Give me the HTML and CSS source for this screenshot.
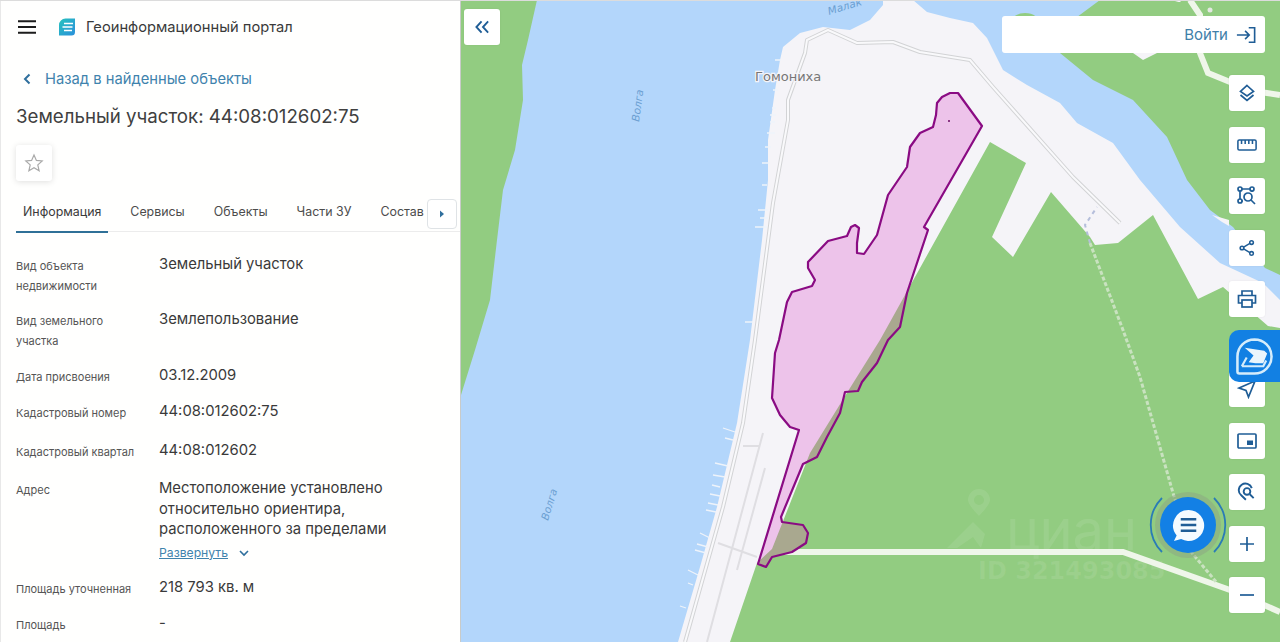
FILE: index.html
```html
<!DOCTYPE html>
<html lang="ru">
<head>
<meta charset="utf-8">
<title>Геоинформационный портал</title>
<link rel="stylesheet" href="styles.css">
</head>
<body>
<div class="app">
  <aside class="panel">
    <header class="brand">
      <svg class="burger" viewBox="0 0 18 14"><path d="M0 1.200h18M0 7h18M0 12.800h18"/></svg>
      <svg class="logo" viewBox="0 0 18 18">
        <defs><linearGradient id="lg" x1="0" y1="0" x2="1" y2="1"><stop offset="0" stop-color="#27c3bd"/><stop offset="1" stop-color="#2b8fdc"/></linearGradient></defs>
        <path d="M1 7a6.500 6.500 0 0 1 6.500-6.500H17V14a3.500 3.500 0 0 1-3.500 3.500H1z" fill="url(#lg)"/>
        <path d="M6 5.500h9M4.500 9h10M6 12.500h8" stroke="#fff" stroke-width="1.400" fill="none"/>
      </svg>
      <span class="brand-name">Геоинформационный портал</span>
    </header>
    <a class="back"><svg class="back-icon" viewBox="0 0 8 12"><path d="M6.500 1.500 2 6l4.500 4.500"/></svg>Назад в найденные объекты</a>
    <h1 class="title">Земельный участок: 44:08:012602:75</h1>
    <button class="star"><svg viewBox="0 0 20 20"><path d="m10 2 2.400 5.400 5.800.6-4.400 3.900 1.300 5.800-5.100-3-5.100 3 1.300-5.800L1.800 8l5.800-.6z"/></svg></button>
    <nav class="tabs">
      <a class="tab active">Информация</a>
      <a class="tab">Сервисы</a>
      <a class="tab">Объекты</a>
      <a class="tab">Части ЗУ</a>
      <a class="tab">Состав</a>
      <span class="tab-next"><svg viewBox="0 0 6 10"><path d="M1 1.500 5 5 1 8.500z"/></svg></span>
    </nav>
    <dl class="props">
      <dt>Вид объекта недвижимости</dt><dd>Земельный участок</dd>
      <dt>Вид земельного участка</dt><dd>Землепользование</dd>
      <dt>Дата присвоения</dt><dd>03.12.2009</dd>
      <dt>Кадастровый номер</dt><dd>44:08:012602:75</dd>
      <dt>Кадастровый квартал</dt><dd>44:08:012602</dd>
      <dt>Адрес</dt>
      <dd>Местоположение установлено относительно ориентира, расположенного за пределами
        <a class="expand"><span class="expand-text">Развернуть</span><svg viewBox="0 0 12 8"><path d="m2 2 4 4 4-4"/></svg></a>
      </dd>
      <dt>Площадь уточненная</dt><dd>218 793 кв. м</dd>
      <dt>Площадь</dt><dd>-</dd>
    </dl>
  </aside>

  <main class="map">
    <svg class="map-canvas" viewBox="461 0 819 642">
      <defs>
        <clipPath id="parcel-clip"><polygon points="982,126 958,93 950,93 942,97 937,103 936,115 933,127 920,133 910,147 907,167 888,195 877,235 864,254 857,253 857,243 859,228 855,225 851,227 847,236 828,241 808,262 808,268 815,280 812,286 792,292 787,302 779,340 775,353 772,398 780,415 790,427 799,430 758,564 766,567 772,557 792,552 806,543 808,533 803,525 782,522 781,517 803,464 817,457 827,437 840,413 845,392 858,391 862,382 877,363 888,340 900,327 907,293 928,230 924,227"/></clipPath>
      </defs>
      <rect class="green" x="461" y="0" width="819" height="642"/>
      <polygon class="water" points="537,0 528,40 522,65 523,100 515,150 503,190 497,240 490,300 475,350 461,395 461,642 700,642 800,300 900,60 1100,150 1200,270 1280,305 1280,275 1265,268 1233,227 1210,210 1187,180 1167,137 1133,100 1093,80 1060,53 1073,20 1100,0"/>
      <ellipse class="green" cx="1025" cy="24" rx="15" ry="11"/>
      <polygon class="land" points="883,0 913,0 927,12 950,18 973,23 987,38 1003,70 1027,85 1060,103 1077,123 1113,143 1140,180 1180,227 1220,263 1263,283 1280,300 1280,328 1268,326 1223,287 1198,299 1153,215 1118,243 1095,245 1090,237 1051,192 1013,257 992,237 1026,163 990,142 905,295 880,340 850,388 810,453 772,549 757,563 730,642 678,642 700,567 717,507 737,423 750,340 762,240 768,180 768,140 775,90 780,60 783,47 800,33 823,27 850,30 870,20 883,5"/>
      <polygon class="land" points="1212,215 1229,220 1229,226 1222,222"/>
      <polygon class="land" points="1133,53 1157,53 1143,60"/>
      <polygon class="land" points="1175,2 1182,0 1180,2"/>
      <path class="jetty" d="M775 60h6M773 90h5M772 108h4M770 115h6M770 122h5M767 133h8M765 147h6M762 163h8M762 185h5M758 210h10M760 218h8M755 227h12M745 322h8M723 428l12 4M725 438l8 2M715 463l13 3M713 475l12 2M712 485l8 2M710 494l10 2M708 503l10 2M706 510l10 2M700 533l10 5M697 544l11 3M695 550l11 3M688 570l10 5M688 583l5 2M680 606l6 2"/>
      <path class="road-inner" d="M763 433 707 642M765 468 737 570M743 446h17M718 543l39 14"/>
      <path class="road-edge" d="M685 642 723 507 743 423 755 340 773 203 788 120 788 100 805 53 807 40 828 30 857 43 893 42 920 52 970 60 993 87 1073 177 1120 223"/>
      <path class="road-core" d="M685 642 723 507 743 423 755 340 773 203 788 120 788 100 805 53 807 40 828 30 857 43 893 42 920 52 970 60 993 87 1073 177 1120 223"/>
      <path class="track-white" d="M770 552H1123L1230 590 1280 612"/>
      <path class="track-white" d="M1190 0 1200 15 1200 53 1208 73 1230 82 1260 92 1280 95"/>
      <circle class="track-dot" cx="1210" cy="10" r="2.500"/>
      <path class="trail" d="M1090 243 1123 330 1140 377 1173 493 1192 553 1217 583"/>
      <path class="trail-blue" d="M1090 243 1085 225 1097 207"/>
      <polygon class="parcel-fill" points="982,126 958,93 950,93 942,97 937,103 936,115 933,127 920,133 910,147 907,167 888,195 877,235 864,254 857,253 857,243 859,228 855,225 851,227 847,236 828,241 808,262 808,268 815,280 812,286 792,292 787,302 779,340 775,353 772,398 780,415 790,427 799,430 758,564 766,567 772,557 792,552 806,543 808,533 803,525 782,522 781,517 803,464 817,457 827,437 840,413 845,392 858,391 862,382 877,363 888,340 900,327 907,293 928,230 924,227"/>
      <polygon class="parcel-overlap" clip-path="url(#parcel-clip)" points="990,142 905,295 880,340 850,388 810,453 772,549 757,563 730,642 1000,642 1000,142"/>
      <polygon class="parcel-line" points="982,126 958,93 950,93 942,97 937,103 936,115 933,127 920,133 910,147 907,167 888,195 877,235 864,254 857,253 857,243 859,228 855,225 851,227 847,236 828,241 808,262 808,268 815,280 812,286 792,292 787,302 779,340 775,353 772,398 780,415 790,427 799,430 758,564 766,567 772,557 792,552 806,543 808,533 803,525 782,522 781,517 803,464 817,457 827,437 840,413 845,392 858,391 862,382 877,363 888,340 900,327 907,293 928,230 924,227"/>
      <circle class="parcel-dot" cx="949" cy="121" r="1"/>
      <text class="town" x="755" y="81">Гомониха</text>
      <text class="river" transform="translate(639 122) rotate(-82)">Волга</text>
      <text class="river" transform="translate(548 521) rotate(-73)">Волга</text>
      <text class="river" transform="translate(829 15) rotate(-17)">Малак</text>
      <path class="wm-shape" d="M979 489a11 11 0 0 1 11 11c0 5-11 16-11 16s-11-11-11-16a11 11 0 0 1 11-11zm0 6a5 5 0 1 0 0 10 5 5 0 0 0 0-10zM947 548l26-26 12 12-4 14-8-11-16 11z"/>
      <text class="wm-title" x="1006" y="550">циан</text>
      <text class="wm-id" x="978" y="579">ID 321493085</text>
    </svg>

    <button class="tool collapse"><svg viewBox="0 0 16 14"><path d="M7 1 1.500 7 7 13M14 1 8.500 7 14 13"/></svg></button>

    <a class="login"><span>Войти</span>
      <svg viewBox="0 0 22 18"><path d="M1 9h13M10 4.500 14.500 9 10 13.500M14 1h6.500v16H14"/></svg>
    </a>

    <div class="tools tools-top">
      <button class="tool"><svg viewBox="0 0 20 20"><path d="M10 2.500 16.500 8.500 10 13 3.500 8.500zM3.500 12 10 17.500 16.500 12"/></svg></button>
      <button class="tool"><svg viewBox="0 0 22 14"><rect x="1" y="1.500" width="20" height="11" rx="1.500"/><path d="M5 1.500v4.500M9 1.500v4.500M13 1.500v4.500M17 1.500v4.500"/></svg></button>
      <button class="tool"><svg viewBox="0 0 20 20"><circle cx="3" cy="3" r="2"/><circle cx="15" cy="3" r="2"/><circle cx="3" cy="15" r="2"/><circle cx="11" cy="11" r="4"/><path d="M5 3h8M3 5v8M15 5v1M5 15h1M14 14l4 4"/></svg></button>
      <button class="tool"><svg viewBox="-2 -2 22 22"><circle cx="14" cy="3" r="2"/><circle cx="3.500" cy="9" r="2"/><circle cx="14" cy="15" r="2"/><path d="M12.200 4 5.300 8M5.300 10l6.900 4"/></svg></button>
      <button class="tool"><svg viewBox="0 0 20 20"><path d="M5 6V2h10v4M5 14H1.500V6.500h17V14H15"/><rect x="5" y="11" width="10" height="7"/></svg></button>
    </div>

    <div class="tools tools-bottom">
      <button class="tool"><svg viewBox="0 0 20 20"><path d="M18 2 2 9l7 2.500L11.500 18z"/></svg></button>
      <button class="tool"><svg viewBox="0 0 20 16"><rect x="1" y="1" width="18" height="14" rx="1"/><rect class="solid" x="10" y="7.500" width="6" height="4.500"/></svg></button>
      <button class="tool"><svg viewBox="0 0 18 18"><path d="M8 16 3.800 12a6 6 0 1 1 9.500-6.500"/><circle cx="9" cy="8.500" r="3"/><path d="m11.500 11 3.500 3.500"/></svg></button>
      <button class="tool"><svg viewBox="0 0 20 20"><path d="M10 3v14M3 10h14"/></svg></button>
      <button class="tool"><svg viewBox="0 0 20 20"><path d="M3 10h14"/></svg></button>
    </div>

    <button class="doc-tab">
      <svg viewBox="0 0 40 40">
        <path class="doc-ring" d="M20 2.500a17.500 17.500 0 0 1 0 35H4.500a2 2 0 0 1-2-2V20A17.500 17.500 0 0 1 20 2.500z"/>
        <path class="doc-sheet" d="M10 11l20 3 3 3-4 10H21l-7-1 5-7z"/>
        <path class="doc-fold" d="M7 30l5-9M7 30h22l3-6"/>
      </svg>
    </button>

    <button class="chat">
      <svg class="chat-arcs" viewBox="0 0 80 80">
        <path d="M14 13a38 38 0 0 0 0 54M66 13a38 38 0 0 1 0 54"/>
      </svg>
      <svg class="chat-icon" viewBox="0 0 34 34">
        <path class="chat-bubble" d="M17 1a16 16 0 1 1-7.600 30L2 33l2.800-5.800A16 16 0 0 1 17 1z"/>
        <path class="chat-lines" d="M9 10.500h16M9 16.500h16M9 22.500h16"/>
      </svg>
    </button>
  </main>
</div>
</body>
</html>
```
FILE: styles.css
```css
* { box-sizing: border-box; }
html, body { margin: 0; height: 100%; overflow: hidden; }
body { font-family: Inter, "Liberation Sans", sans-serif; color: #383838; background: #fff; }
button { padding: 0; border: 0; background: none; font: inherit; cursor: pointer; }
a { cursor: pointer; }

.app { display: flex; height: 642px; border-top: 1px solid #dcdcdc; }

/* panel */
.panel { flex: 0 0 461px; height: 641px; overflow: hidden; background: #fffffe; border-left: 1px solid #e8e8e8; border-right: 1px solid #c9cbc9; padding-left: 15px; }
.brand { display: flex; align-items: center; height: 18px; margin-top: 17px; }
.burger { width: 18px; height: 14px; margin-left: 2px; fill: none; stroke: #1c1c1c; stroke-width: 2; }
.logo { width: 18px; height: 18px; margin-left: 22px; }
.brand-name { margin-left: 10px; font-size: 14.700px; color: #3a3a3a; white-space: nowrap; }

.back { display: flex; align-items: center; margin-top: 33px; height: 20px; font-size: 14.750px; color: #3f83ad; }
.back-icon { width: 8px; height: 12px; margin: 0 14px 0 7px; fill: none; stroke: #2f6f9d; stroke-width: 2; }

.title { margin: 15px 0 0; font-size: 18.700px; line-height: 26px; font-weight: 400; color: #404040; white-space: nowrap; }

.star { display: flex; align-items: center; justify-content: center; width: 36px; height: 36px; margin-top: 15px; border-radius: 3px; background: #fff; box-shadow: 0 1px 6px rgba(0,0,0,.13); }
.star svg { width: 20px; height: 20px; fill: none; stroke: #a9a9a9; stroke-width: 1.200; }

.tabs { position: relative; display: flex; width: 445px; height: 50px; margin-top: 1px; padding-top: 18px; border-bottom: 1px solid #ececec; }
.tab { height: 32px; padding: 3px 7px 0; margin-right: 15px; font-size: 12.400px; line-height: 18px; color: #4c4c4c; white-space: nowrap; }
.tab.active { margin-bottom: -1px; height: 33px; border-bottom: 2px solid #2f7097; color: #3a3a3a; }
.tab-next { position: absolute; right: 4px; top: 17px; display: flex; align-items: center; justify-content: center; width: 30px; height: 30px; background: #fff; border: 1px solid #dfe3e6; border-radius: 4px; }
.tab-next svg { width: 6px; height: 10px; fill: #2f6f9d; }

.props { display: grid; grid-template-columns: 143px 1fr; grid-template-rows: 55px 56px 36px 39px 38px 99px 36px auto; margin: 24px 0 0; }
.props dt { font-size: 11px; line-height: 20.400px; color: #555; max-width: 120px; }
.props dt:nth-of-type(3), .props dt:nth-of-type(4), .props dt:nth-of-type(5), .props dt:nth-of-type(7) { max-width: none; white-space: nowrap; }
.props dd { margin: -2px 0 0; padding-right: 40px; font-size: 14.800px; line-height: 20.500px; color: #3a3a3a; }
.expand { display: flex; align-items: center; margin-top: 3px; font-size: 12.200px; line-height: 20px; color: #3f83ad; }
.expand-text { text-decoration: underline; }
.expand svg { width: 12px; height: 8px; margin-left: 10px; fill: none; stroke: #2f6f9d; stroke-width: 1.600; }

/* map */
.map { position: relative; flex: 1; height: 641px; overflow: hidden; background: #92cc81; }
.map-canvas { position: absolute; left: 0; top: -1px; width: 819px; height: 642px; display: block; }
.green { fill: #92cc81; }
.water { fill: #b3d6fb; }
.land { fill: #f5f4f8; }
.jetty { fill: none; stroke: #eef3fa; stroke-width: 1.300; }
.road-inner { fill: none; stroke: #dfdee2; stroke-width: 2; }
.road-edge { fill: none; stroke: #d2d3d5; stroke-width: 4; stroke-linejoin: round; }
.road-core { fill: none; stroke: #f9f9fb; stroke-width: 2; stroke-linejoin: round; }
.track-white { fill: none; stroke: #eff6ea; stroke-width: 6; }
.track-dot { fill: #e4e8e2; }
.trail { fill: none; stroke: #c9e2c0; stroke-width: 3; stroke-dasharray: 4 2; }
.trail-blue { fill: none; stroke: #b5bedb; stroke-width: 2; stroke-dasharray: 4 4; }
.parcel-fill { fill: #edc3ea; }
.parcel-overlap { fill: #a9a88f; }
.parcel-line { fill: none; stroke: #8a0b83; stroke-width: 2.200; stroke-linejoin: round; }
.parcel-dot { fill: #6a0a63; }
.town { font-family: "DejaVu Sans", sans-serif; font-size: 13px; fill: #777; stroke: #f5f4f8; stroke-width: 2.500; paint-order: stroke; }
.river { font-family: "DejaVu Sans", sans-serif; font-style: italic; font-size: 10.500px; fill: #6b9fd2; }
.wm-shape { fill: #fff; fill-opacity: .09; }
.wm-title { font-family: Inter, sans-serif; font-size: 56px; font-weight: 400; fill: #fff; fill-opacity: .09; }
.wm-id { font-family: "DejaVu Sans", sans-serif; font-size: 24px; font-weight: 700; fill: #fff; fill-opacity: .09; }

.tool { display: flex; align-items: center; justify-content: center; width: 36px; height: 36px; flex: none; background: #fff; border-radius: 3px; box-shadow: 0 0 2px rgba(0,0,0,.08); }
.tool svg { width: 20px; height: 20px; fill: none; stroke: #1f5d96; stroke-width: 1.700; }
.tool .solid { fill: #1f5d96; stroke: none; }
.collapse { position: absolute; left: 3px; top: 8px; }
.collapse svg { width: 15px; height: 14px; stroke-width: 2; }

.tools { position: absolute; right: 15px; display: flex; flex-direction: column; gap: 15.500px; }
.tools-top { top: 74px; }
.tools-bottom { top: 370px; }

.login { position: absolute; left: 541px; top: 15px; display: flex; align-items: center; justify-content: flex-end; gap: 8px; width: 263px; height: 37px; padding-right: 9px; background: #fff; border-radius: 3px; font-size: 15px; color: #3f7fa9; }
.login svg { width: 20px; height: 18px; fill: none; stroke: #1f5d96; stroke-width: 1.800; }

.doc-tab { position: absolute; right: 0; top: 329px; display: flex; align-items: center; justify-content: flex-start; width: 51px; height: 52px; padding-left: 6px; background: #1280e3; border-radius: 10px 0 0 10px; }
.doc-tab svg { width: 39px; height: 39px; }
.doc-ring { fill: none; stroke: #d5ecfb; stroke-width: 2.600; }
.doc-sheet { fill: #eaf5fc; }
.doc-fold { fill: none; stroke: #d5ecfb; stroke-width: 2.200; }

.chat { position: absolute; left: 687px; top: 484px; display: flex; align-items: center; justify-content: center; width: 80px; height: 80px; }
.chat::before { content: ""; position: absolute; left: 12px; top: 12px; width: 56px; height: 56px; border-radius: 50%; background: #1380e5; box-shadow: 0 0 0 5px rgba(140,160,130,.45); }
.chat-arcs { position: absolute; inset: 0; width: 80px; height: 80px; fill: none; stroke: #2a7cb6; stroke-width: 1.800; }
.chat-icon { position: relative; width: 33px; height: 33px; }
.chat-bubble { fill: #f5fbff; }
.chat-lines { fill: none; stroke: #1f5d96; stroke-width: 2.600; }
```
